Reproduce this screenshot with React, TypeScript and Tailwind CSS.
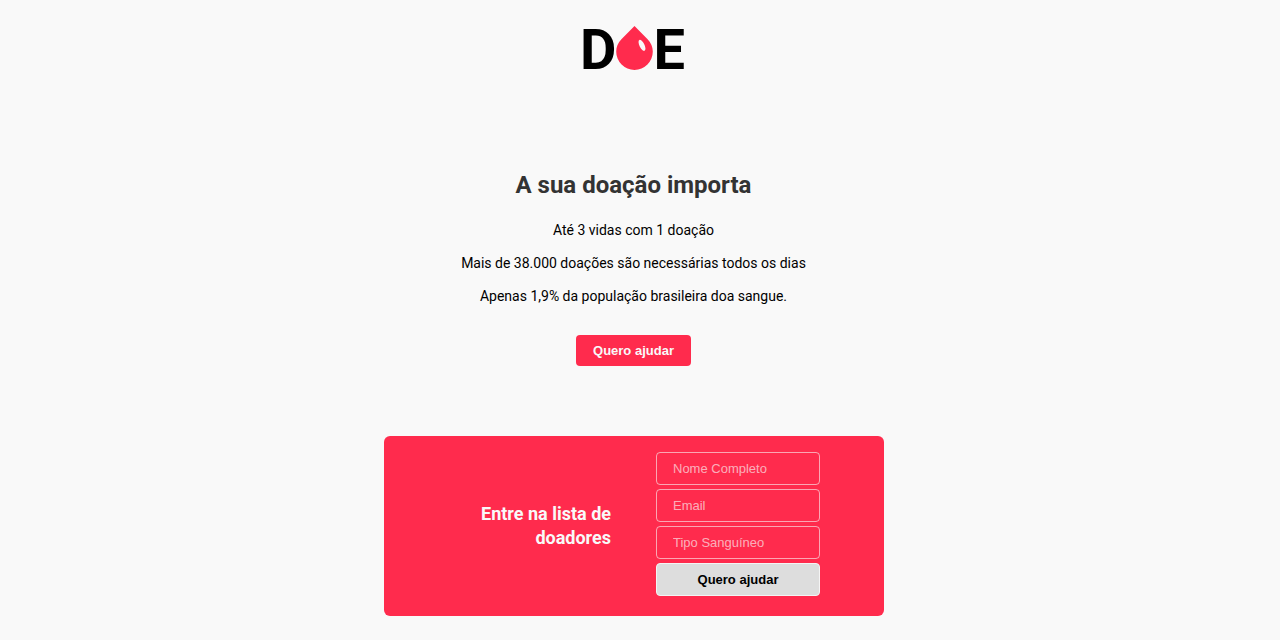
import React from "react";

const facts = [
  "Até 3 vidas com 1 doação",
  "Mais de 38.000 doações são necessárias todos os dias",
  "Apenas 1,9% da população brasileira doa sangue.",
];

const fields = [
  { id: "name", label: "Nome Completo", type: "text" },
  { id: "email", label: "Email", type: "email" },
  { id: "blood", label: "Tipo Sanguíneo", type: "text" },
];

function Logo() {
  return (
    <a
      href="#"
      aria-label="DOE"
      className="flex items-center text-[56px] leading-[60px] font-bold text-black"
    >
      <span>D</span>
      <svg width="37" height="48" viewBox="0 0 37 48" aria-hidden="true">
        <path
          d="M18.5 0 L31.6 13.2 C35 16.6 36.8 21 36.8 25.6 A18.3 18.3 0 0 1 0.2 25.6 C0.2 21 2 16.6 5.4 13.2 Z"
          fill="#ff2b4d"
        />
        <ellipse
          cx="26"
          cy="19.3"
          rx="2.5"
          ry="6"
          transform="rotate(-26 26 19.3)"
          fill="#f9f9f9"
        />
      </svg>
      <span>E</span>
    </a>
  );
}

export default function App() {
  return (
    <div className="flex min-h-screen flex-col items-center bg-[#f9f9f9] pt-5 pr-3 pb-6 font-['Roboto',sans-serif] text-black">
      <header className="pr-[3px]">
        <Logo />
      </header>

      <main className="flex w-full flex-col items-center pt-[91px]">
        <section className="flex flex-col items-center pr-px text-center">
          <h1 className="text-[24px] leading-[28px] font-bold text-[#333333]">
            A sua doação importa
          </h1>
          <div className="mt-[23px] flex flex-col gap-4 text-[14px] leading-[17px]">
            {facts.map((fact) => (
              <p key={fact}>{fact}</p>
            ))}
          </div>
          <button
            type="button"
            className="mt-[30px] rounded-[4px] bg-[#ff2b4d] px-[17px] py-2 font-['Liberation_Sans',sans-serif] text-[13px] leading-[15px] font-bold text-[#f9f9f9]"
          >
            Quero ajudar
          </button>
        </section>

        <section className="mt-[70px] flex w-full max-w-[500px] items-center justify-end gap-[45px] rounded-[6px] bg-[#ff2b4d] py-4 pr-16">
          <h2 className="max-w-[140px] text-right text-[18px] leading-[24px] font-bold text-[#f9f9f9]">
            Entre na lista de doadores
          </h2>
          <form
            className="mb-1 flex w-[164px] flex-col gap-1 font-['Liberation_Sans',sans-serif] text-[13px] leading-[15px]"
            onSubmit={(event) => event.preventDefault()}
          >
            {fields.map((field) => (
              <input
                key={field.id}
                id={field.id}
                type={field.type}
                aria-label={field.label}
                placeholder={field.label}
                className="h-[33px] w-full rounded-[4px] border border-[#f9f9f9]/60 bg-transparent px-4 text-[#f9f9f9] placeholder:text-[#f9f9f9]/65"
              />
            ))}
            <button
              type="submit"
              className="h-[33px] rounded-[4px] border border-[#f4f4f4] bg-[#dddddd] font-bold text-black"
            >
              Quero ajudar
            </button>
          </form>
        </section>
      </main>
    </div>
  );
}
